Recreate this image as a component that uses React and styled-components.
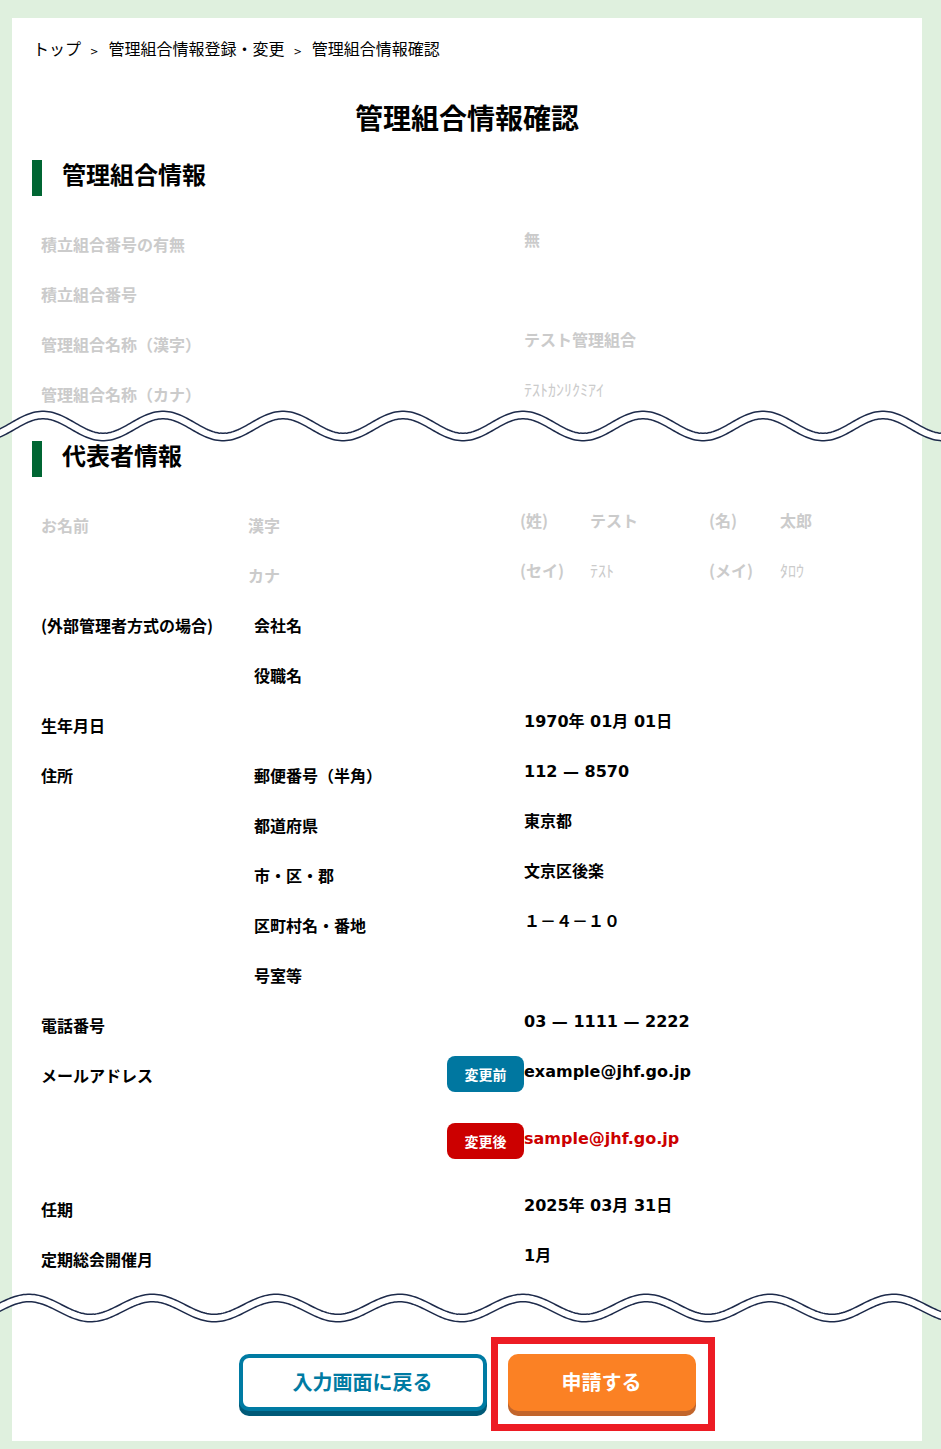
import React from 'react';
import styled, { createGlobalStyle } from 'styled-components';

const GlobalStyle = createGlobalStyle`
    body {
        margin:0;
        background-color:#dff0de;
        font-family:"DejaVu Sans", "Noto Sans CJK JP", sans-serif;
        color:#000;
    }
`;

const Page = styled.div`
    padding-bottom:8px;
    overflow:hidden;
`;

const Card = styled.div`
    margin:18px 19px 0 12px;
    background-color:#fff;
    padding:20px 20px 30px;
`;

const Breadcrumb = styled.div`
    display:flex;
    align-items:baseline;
    font-family:"Noto Sans CJK JP", sans-serif;
    font-size:16px;
    line-height:20px;
    padding-left:1px;
`;

const Crumb = styled.span`
    color:#000;
`;

const Separator = styled.span`
    font-family:"DejaVu Sans", sans-serif;
    font-size:10px;
    margin:0 10px 0 9px;
`;

const Title = styled.h1`
    margin:37px 0 0;
    text-align:center;
    font-family:"Noto Sans CJK JP", sans-serif;
    font-size:28px;
    line-height:36px;
    font-weight:700;
`;

const SectionHeading = styled.h2`
    display:flex;
    align-items:center;
    margin:${props => props.$gap}px 0 0;
    font-family:"Noto Sans CJK JP", sans-serif;
    font-size:24px;
    font-weight:700;

    &::before {
        content:'';
        width:10px;
        height:36px;
        background-color:#006633;
        margin-right:20px;
    }
`;

const HeadingText = styled.span`
    line-height:28px;
    padding-bottom:8px;
`;

const Rows = styled.div`
    margin-top:22px;
`;

const Row = styled.div`
    display:grid;
    grid-template-columns:213px 270px 1fr;
    padding-left:9px;
    min-height:50px;
    color:${props => props.$faded ? '#cbcbcb' : '#000'};
    font-weight:700;
    font-size:16px;
    line-height:24px;
`;

const Label = styled.div`
    padding-top:14px;
    font-family:"Noto Sans CJK JP", sans-serif;
    white-space:nowrap;
`;

const Sub = styled.div`
    padding-top:14px;
    margin-left:${props => props.$shift || 0}px;
    font-family:"Noto Sans CJK JP", sans-serif;
`;

const BadgeCell = styled.div`
    display:flex;
    justify-content:flex-end;
    padding:7px 0 24px;
`;

const Badge = styled.span`
    display:flex;
    align-items:center;
    justify-content:center;
    width:77px;
    height:36px;
    border-radius:8px;
    background-color:${props => props.$after ? '#cc0000' : '#0077a0'};
    color:#fff;
    font-family:"Noto Sans CJK JP", sans-serif;
    font-size:14px;
    font-weight:700;
`;

const Value = styled.div`
    padding-top:11px;
    color:${props => props.$red ? '#cc0000' : 'inherit'};
    white-space:nowrap;
`;

const NameGrid = styled.div`
    display:grid;
    grid-template-columns:70px 119px 71px auto;
    padding-top:9px;
    margin-left:-4px;
    font-family:"Noto Sans CJK JP", sans-serif;
`;

const Kana = styled.span`
    font-weight:400;
`;

const WaveBox = styled.div`
    margin:${props => props.$top}px 0 0 -32px;
    width:941px;
    height:38px;

    svg {
        display:block;
    }
`;

const Buttons = styled.div`
    display:flex;
    justify-content:center;
    gap:21px;
    margin-top:27px;
`;

const BackButton = styled.button`
    width:248px;
    height:57px;
    padding:0 0 3px;
    border:4px solid #007ba3;
    border-radius:10px;
    background-color:#fff;
    box-shadow:0 5px 0 #005a78;
    color:#007ba3;
    font-family:"Noto Sans CJK JP", sans-serif;
    font-size:20px;
    font-weight:700;
    cursor:pointer;
`;

const SubmitWrap = styled.div`
    position:relative;

    &::after {
        content:'';
        position:absolute;
        left:-17px;
        top:-17px;
        right:-19px;
        bottom:-20px;
        border:7px solid #ed1c24;
        pointer-events:none;
    }
`;

const SubmitButton = styled.button`
    width:188px;
    height:57px;
    padding:0 0 3px;
    border:none;
    border-radius:10px;
    background-color:#fb8124;
    box-shadow:0 5px 0 #c2652b;
    color:#fff;
    font-family:"Noto Sans CJK JP", sans-serif;
    font-size:20px;
    font-weight:700;
    cursor:pointer;
`;

// 省略を表す二重の波線
function Wave({ top, peak, period, amp }) {
    let d = '';
    for (let x = -6; x <= 948; x += 2) {
        const y = 19 - amp * Math.cos((2 * Math.PI * (x - peak)) / period);
        d += (x === -6 ? 'M' : 'L') + x + ' ' + y.toFixed(2) + ' ';
    }
    return (
        <WaveBox $top={top}>
            <svg width="941" height="38" viewBox="0 0 941 38">
                <path d={d} fill="none" stroke="#1d2a4a" strokeWidth="9" />
                <path d={d} fill="none" stroke="#fff" strokeWidth="6" />
            </svg>
        </WaveBox>
    );
}

const addressRows = [
    ['住所', '郵便番号（半角）', '112 — 8570'],
    ['', '都道府県', '東京都'],
    ['', '市・区・郡', '文京区後楽'],
    ['', '区町村名・番地', '１－４－１０'],
    ['', '号室等', ''],
];

export default function App() {
    return (
        <Page>
            <GlobalStyle />
            <Card>
                <Breadcrumb>
                    <Crumb>トップ</Crumb>
                    <Separator>&gt;</Separator>
                    <Crumb>管理組合情報登録・変更</Crumb>
                    <Separator>&gt;</Separator>
                    <Crumb>管理組合情報確認</Crumb>
                </Breadcrumb>

                <Title>管理組合情報確認</Title>

                <SectionHeading $gap={25}><HeadingText>管理組合情報</HeadingText></SectionHeading>
                <Rows>
                    <Row $faded>
                        <Label>積立組合番号の有無</Label>
                        <Sub />
                        <Value>無</Value>
                    </Row>
                    <Row $faded>
                        <Label>積立組合番号</Label>
                        <Sub />
                        <Value />
                    </Row>
                    <Row $faded>
                        <Label>管理組合名称（漢字）</Label>
                        <Sub />
                        <Value>テスト管理組合</Value>
                    </Row>
                    <Row $faded>
                        <Label>管理組合名称（カナ）</Label>
                        <Sub />
                        <Value><Kana>ﾃｽﾄｶﾝﾘｸﾐｱｲ</Kana></Value>
                    </Row>
                </Rows>

                <Wave top={-11} peak={43} period={120} amp={11} />

                <SectionHeading $gap={-4}><HeadingText>代表者情報</HeadingText></SectionHeading>
                <Rows>
                    <Row $faded>
                        <Label>お名前</Label>
                        <Sub $shift={-6}>漢字</Sub>
                        <NameGrid>
                            <span>(姓)</span>
                            <span>テスト</span>
                            <span>(名)</span>
                            <span>太郎</span>
                        </NameGrid>
                    </Row>
                    <Row $faded>
                        <Label />
                        <Sub $shift={-6}>カナ</Sub>
                        <NameGrid>
                            <span>(セイ)</span>
                            <Kana>ﾃｽﾄ</Kana>
                            <span>(メイ)</span>
                            <Kana>ﾀﾛｳ</Kana>
                        </NameGrid>
                    </Row>
                    <Row>
                        <Label>(外部管理者方式の場合)</Label>
                        <Sub>会社名</Sub>
                        <Value />
                    </Row>
                    <Row>
                        <Label />
                        <Sub>役職名</Sub>
                        <Value />
                    </Row>
                    <Row>
                        <Label>生年月日</Label>
                        <Sub />
                        <Value>1970年 01月 01日</Value>
                    </Row>
                    {addressRows.map(([label, sub, value]) => (
                        <Row key={sub}>
                            <Label>{label}</Label>
                            <Sub>{sub}</Sub>
                            <Value>{value}</Value>
                        </Row>
                    ))}
                    <Row>
                        <Label>電話番号</Label>
                        <Sub />
                        <Value>03 — 1111 — 2222</Value>
                    </Row>
                    <Row>
                        <Label>メールアドレス</Label>
                        <BadgeCell><Badge>変更前</Badge></BadgeCell>
                        <Value>example@jhf.go.jp</Value>
                    </Row>
                    <Row>
                        <Label />
                        <BadgeCell><Badge $after>変更後</Badge></BadgeCell>
                        <Value $red>sample@jhf.go.jp</Value>
                    </Row>
                    <Row>
                        <Label>任期</Label>
                        <Sub />
                        <Value>2025年 03月 31日</Value>
                    </Row>
                    <Row>
                        <Label>定期総会開催月</Label>
                        <Sub />
                        <Value>1月</Value>
                    </Row>
                </Rows>

                <Wave top={6} peak={29} period={123.5} amp={10} />

                <Buttons>
                    <BackButton type="button">入力画面に戻る</BackButton>
                    <SubmitWrap>
                        <SubmitButton type="button">申請する</SubmitButton>
                    </SubmitWrap>
                </Buttons>
            </Card>
        </Page>
    );
}
